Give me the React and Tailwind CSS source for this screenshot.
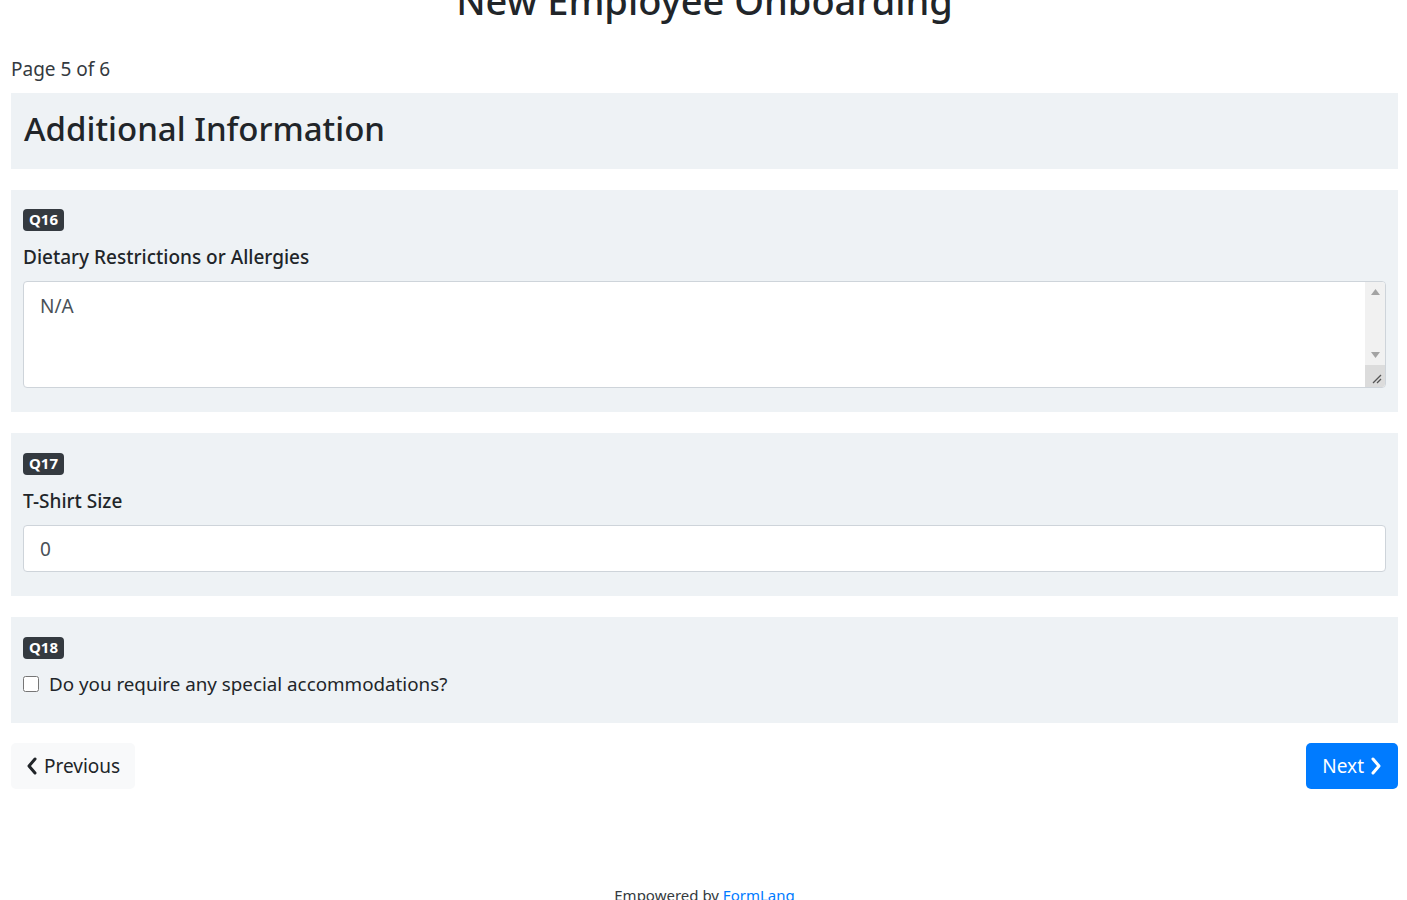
import React from "react";

const Badge = ({ children }) => (
  <span className="inline-flex h-[22px] items-center rounded-[4px] bg-[#343a40] px-[6px] text-[15px] font-bold leading-none text-white">
    {children}
  </span>
);

const Chevron = ({ dir }) => (
  <svg width="12" height="18" viewBox="0 0 12 18" fill="none" stroke="currentColor" strokeWidth="3" strokeLinecap="round" strokeLinejoin="round">
    {dir === "left" ? <path d="M9 2 L3 9 L9 16" /> : <path d="M3 2 L9 9 L3 16" />}
  </svg>
);

// fake scrollbar drawn over the textarea (headless browser hides native ones)
const FakeScrollbar = () => (
  <div className="pointer-events-none absolute top-[1px] right-[1px] bottom-[1px] flex w-[20px] flex-col rounded-r-[3px] bg-[#f1f1f1]">
    <div className="flex h-[20px] items-center justify-center">
      <svg width="9" height="6" viewBox="0 0 9 6"><path d="M0 6 L4.5 0 L9 6 Z" fill="#a3a3a3" /></svg>
    </div>
    <div className="flex-1" />
    <div className="flex h-[20px] items-center justify-center">
      <svg width="9" height="6" viewBox="0 0 9 6"><path d="M0 0 L4.5 6 L9 0 Z" fill="#a3a3a3" /></svg>
    </div>
    <div className="flex h-[22px] items-end justify-end rounded-br-[3px] bg-[#dcdcdc] p-[3px]">
      <svg width="10" height="10" viewBox="0 0 10 10" stroke="#555" strokeWidth="1.2">
        <path d="M1 9 L9 1" />
        <path d="M5 9 L9 5" />
      </svg>
    </div>
  </div>
);

export default function App() {
  return (
    <div className="min-h-screen overflow-hidden bg-white font-['Noto_Sans',sans-serif] text-[#212529]">
      <div className="-mt-[29px] pl-[11px] pr-[9px]">
        <h1 className="-mt-[11px] text-center text-[38px] leading-[58px] font-medium">New Employee Onboarding</h1>

        <p className="mt-[28px] text-[19px] leading-[24px] text-[#343a40]">Page 5 of 6</p>

        <div className="mt-[12px] flex h-[76px] items-center bg-[#eef2f5] px-[13px] pb-[5px]">
          <h2 className="text-[33px] font-medium leading-none">Additional Information</h2>
        </div>

        {/* Q16 */}
        <div className="mt-[21px] bg-[#eef2f5] px-[12px] pt-[17px] pb-[24px]">
          <Badge>Q16</Badge>
          <label className="mt-[14px] block text-[19px] font-medium leading-[24px]">Dietary Restrictions or Allergies</label>
          <div className="relative mt-[12px]">
            <textarea
              readOnly
              defaultValue="N/A"
              className="block h-[107px] w-full resize-y rounded-[4px] border border-[#ced4da] bg-white px-[16px] py-[12px] text-[19px] leading-[24px] text-[#495057] outline-none"
            />
            <FakeScrollbar />
          </div>
        </div>

        {/* Q17 */}
        <div className="mt-[21px] bg-[#eef2f5] px-[12px] pt-[18px] pb-[24px]">
          <Badge>Q17</Badge>
          <label className="mt-[14px] block text-[19px] font-medium leading-[24px]">T-Shirt Size</label>
          <input
            readOnly
            defaultValue="0"
            className="mt-[12px] block h-[47px] w-full rounded-[4px] border border-[#ced4da] bg-white px-[16px] text-[19px] text-[#495057] outline-none"
          />
        </div>

        {/* Q18 */}
        <div className="mt-[21px] bg-[#eef2f5] px-[12px] pt-[18px] pb-[27px]">
          <Badge>Q18</Badge>
          <label className="mt-[13px] flex items-center gap-[10px] text-[18.8px] leading-[24px]">
            <input type="checkbox" className="h-[16px] w-[16px] accent-[#007bff]" />
            Do you require any special accommodations?
          </label>
        </div>

        <div className="mt-[20px] flex items-center justify-between">
          <button className="flex h-[46px] items-center gap-[6px] rounded-[5px] bg-[#f8f9fa] px-[15px] text-[19px] text-[#212529]">
            <Chevron dir="left" />
            Previous
          </button>
          <button className="flex h-[46px] items-center gap-[6px] rounded-[5px] bg-[#007bff] px-[16px] text-[19px] text-white">
            Next
            <Chevron dir="right" />
          </button>
        </div>

        <p className="mt-[95px] text-center text-[15px] text-[#343a40]">
          Empowered by <a className="text-[#007bff]">FormLang</a>
        </p>
      </div>
    </div>
  );
}
